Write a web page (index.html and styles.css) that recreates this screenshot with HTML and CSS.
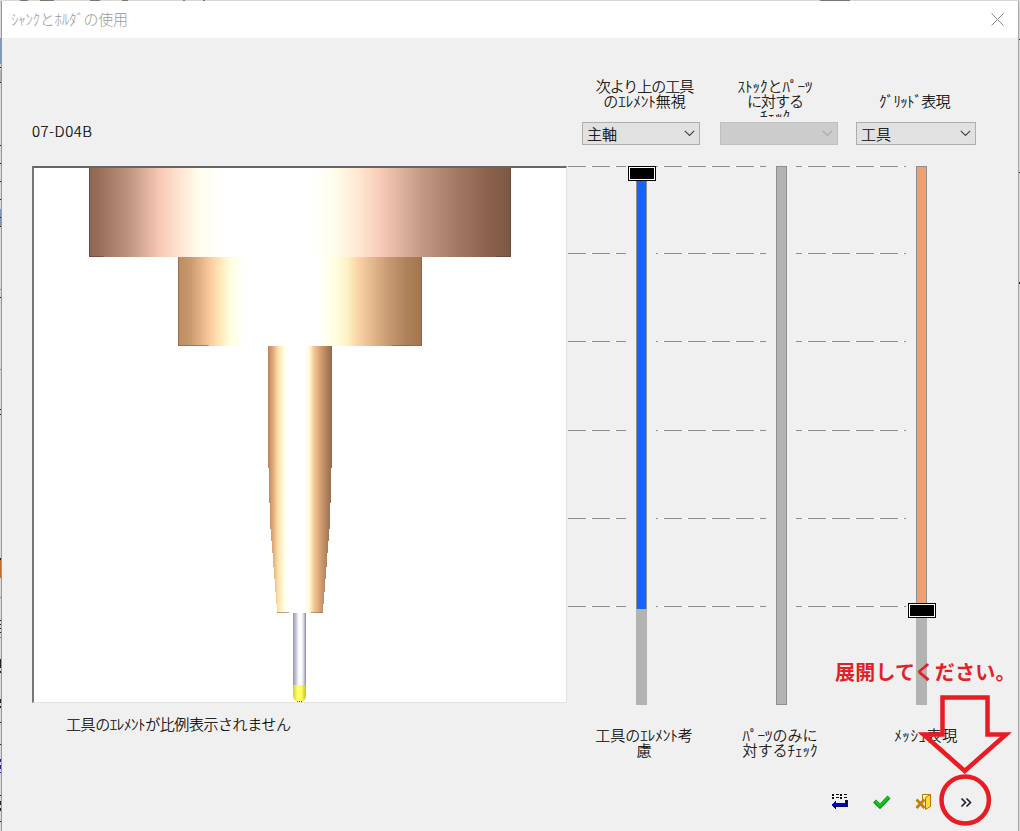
FILE: index.html
```html
<!DOCTYPE html>
<html lang="ja">
<head>
<meta charset="utf-8">
<title>ｼｬﾝｸとﾎﾙﾀﾞの使用</title>
<link rel="stylesheet" href="styles.css">
</head>
<body>
<div class="desktop">
  <svg class="edge" width="1020" height="831" shape-rendering="crispEdges">
    <path fill="#7e98b8" d="M0 38h2v26H0zM0 209h2v18H0z"/>
    <path fill="#aab0b8" d="M0 70h2v12H0z"/>
    <path fill="#c4702c" d="M0 560h2v18H0z"/>
    <path fill="#222" d="M0 67h2v1H0zM0 82h2v1H0zM0 145h2v1H0zM0 163h2v1H0zM0 181h2v1H0zM0 199h2v1H0zM0 217h2v1H0zM0 226h2v1H0zM0 297h2v1H0zM0 409h2v1H0zM0 414h2v1H0zM0 558h2v2H0zM0 620h2v1H0zM0 624h2v1H0zM0 628h2v1H0zM0 632h2v1H0zM0 659h2v9H0zM0 671h2v2H0zM0 699h2v4H0zM0 706h2v2H0zM0 722h2v1H0zM0 744h2v1H0zM0 795h2v1H0zM0 801h2v4H0zM0 808h2v3H0zM0 821h2v1H0z"/>
    <path fill="#888" d="M0 289h2v1H0zM0 369h2v1H0zM0 597h2v1H0zM0 637h2v1H0z"/>
    <path fill="#2020b0" d="M0 759h2v3H0zM0 765h2v4H0zM0 772h2v1H0z"/>
    <path fill="#777" d="M20 0h8v1h-8zM40 0h14v1H40zM90 0h10v1H90zM122 0h6v1h-6zM183 0h2v1h-2zM203 0h2v1h-2zM820 0h30v1h-30z"/>
    <path fill="#222" d="M1019 39h1v1h-1zM1019 172h1v1h-1zM1019 282h1v2h-1z"/>
  </svg>
  <main class="dialog">
    <header class="titlebar">
      <span class="title">ｼｬﾝｸとﾎﾙﾀﾞの使用</span>
      <svg class="close" width="13" height="13"><path d="M.5.5l12 12M12.500.5l-12 12" stroke="#888" fill="none"/></svg>
    </header>
    <div class="content">
      <section class="preview">
        <div class="tool-name">07-D04B</div>
        <div class="viewport">
          <svg width="533" height="534" viewBox="34 168 533 534">
            <defs>
              <linearGradient id="g1"><stop offset="0" stop-color="#8e6550"/><stop offset=".02" stop-color="#986d58"/><stop offset=".09" stop-color="#ba917b"/><stop offset=".165" stop-color="#f6c7b3"/><stop offset=".22" stop-color="#ffe7d4"/><stop offset=".26" stop-color="#fffdec"/><stop offset=".32" stop-color="#fff"/><stop offset=".53" stop-color="#fff"/><stop offset=".58" stop-color="#fffdec"/><stop offset=".64" stop-color="#ffe7d2"/><stop offset=".69" stop-color="#f7cbb7"/><stop offset=".79" stop-color="#c29a84"/><stop offset=".87" stop-color="#a27a64"/><stop offset=".95" stop-color="#89614c"/><stop offset="1" stop-color="#7e5743"/></linearGradient>
              <linearGradient id="g2"><stop offset="0" stop-color="#bc8b61"/><stop offset=".05" stop-color="#c8996d"/><stop offset=".13" stop-color="#fac99c"/><stop offset=".18" stop-color="#ffedbe"/><stop offset=".22" stop-color="#ffffe1"/><stop offset=".27" stop-color="#fff"/><stop offset=".57" stop-color="#fff"/><stop offset=".63" stop-color="#ffffe7"/><stop offset=".69" stop-color="#fdf4c6"/><stop offset=".735" stop-color="#fbd5a7"/><stop offset=".86" stop-color="#ca9b72"/><stop offset=".94" stop-color="#ac8058"/><stop offset="1" stop-color="#a3764e"/></linearGradient>
              <linearGradient id="g3"><stop offset="0" stop-color="#b9835c"/><stop offset=".08" stop-color="#e2aa7b"/><stop offset=".16" stop-color="#fee2ad"/><stop offset=".26" stop-color="#ffffe8"/><stop offset=".33" stop-color="#fff"/><stop offset=".57" stop-color="#fff"/><stop offset=".65" stop-color="#fff8d6"/><stop offset=".72" stop-color="#f4c695"/><stop offset=".84" stop-color="#cb986c"/><stop offset="1" stop-color="#93684a"/></linearGradient>
              <linearGradient id="g4"><stop offset="0" stop-color="#9295a9"/><stop offset=".3" stop-color="#d5d7eb"/><stop offset=".45" stop-color="#fff"/><stop offset=".65" stop-color="#fff"/><stop offset=".85" stop-color="#c8cae0"/><stop offset="1" stop-color="#8587a0"/></linearGradient>
              <linearGradient id="g5"><stop offset="0" stop-color="#d8ce20"/><stop offset=".35" stop-color="#ffff70"/><stop offset=".65" stop-color="#fffc60"/><stop offset="1" stop-color="#c8be18"/></linearGradient>
            </defs>
            <path fill="url(#g1)" d="M89 168h422v89H89z"/>
            <path fill="none" stroke="#60453a" stroke-opacity=".7" d="M89.500 168v88.500h14M510.500 168v88.500h-14"/>
            <path fill="url(#g2)" d="M178 257h244v89H178z"/>
            <path fill="none" stroke="#805a3a" stroke-opacity=".6" d="M178.500 257v88.500h30M421.500 257v88.500h-30"/>
            <path fill="url(#g3)" d="M268 346h64v122h-1v35h-1v26h-1v12h-1v12h-1v14h-1v12h-1v13h-1v12h-1v9h-46v-9h-1v-12h-1v-13h-1v-12h-1v-14h-1v-12h-1v-12h-1v-26h-1v-35h-1z"/>
            <path stroke="#936d4b" stroke-opacity=".6" d="M277 612.500h12M311 612.500h12"/>
            <path fill="url(#g4)" d="M293 613h13v72h-13z"/>
            <path fill="url(#g5)" d="M293 685h13v11c0 3-2 5-4 5h-5c-2 0-4-2-4-5z"/>
            <path stroke="#665f17" stroke-dasharray="1 1" d="M297 701.500h6"/>
          </svg>
        </div>
        <div class="note">工具のｴﾚﾒﾝﾄが比例表示されません</div>
      </section>
      <section class="controls">
        <div class="heads">
          <div class="field"><div class="label first"><span class="tight">次より上の工具</span><br>のｴﾚﾒﾝﾄ無視</div>
            <div class="combo">主軸<svg class="chev" width="11" height="7"><path d="M.8.8l4.700 4.700L10.200.8"/></svg></div></div>
          <div class="field"><div class="label second">ｽﾄｯｸとﾊﾟｰﾂ<br><span class="tight">に対する</span><br>ﾁｪｯｸ</div>
            <div class="combo disabled"><svg class="chev" width="11" height="7"><path d="M.8.8l4.700 4.700L10.200.8"/></svg></div></div>
          <div class="field wide"><div class="label third"><br><span class="grid-text">ｸﾞﾘｯﾄﾞ表現</span></div>
            <div class="combo">工具<svg class="chev" width="11" height="7"><path d="M.8.8l4.700 4.700L10.200.8"/></svg></div></div>
        </div>
        <div class="sliders">
          <div class="ticks t1"><i></i><i></i><i></i><i></i><i></i><i></i></div>
          <div class="track"><div class="fill blue"></div><div class="rest"></div><div class="thumb top"></div></div>
          <div class="ticks t2"><i></i><i></i><i></i><i></i><i></i><i></i></div>
          <div class="track"><div class="fill gray"></div></div>
          <div class="ticks t3"><i></i><i></i><i></i><i></i><i></i><i></i></div>
          <div class="track"><div class="fill orange"></div><div class="rest"></div><div class="thumb low"></div></div>
        </div>
        <div class="foots">
          <div class="foot f1">工具のｴﾚﾒﾝﾄ考<br>慮</div>
          <div class="foot f2">ﾊﾟｰﾂのみに<br>対するﾁｪｯｸ</div>
          <div class="foot f3">ﾒｯｼｭ表現</div>
        </div>
        <div class="actions">
          <svg width="18" height="16" viewBox="0 0 18 16" shape-rendering="crispEdges">
            <path fill="#111" d="M1 0h2v2H1zM5 0h3v1H5zM9 0h2v2H9zM13 0h3v1h-3zM1 3h2v2H1zM5 3h3v1H5zM9 3h2v2H9zM13 3h3v1h-3z"/>
            <path fill="#0000d8" d="M0 11l5-4v2h9V6h3v7H5v2z"/><path fill="#000068" d="M1 12h15v1H5v2zM15 6h1v7h-1z"/>
          </svg>
          <svg width="18" height="16" viewBox="0 0 18 16"><path fill="none" stroke="#078a12" stroke-width="4" d="M1.500 7L7 12.500 16 3"/><path fill="none" stroke="#0fc51b" stroke-width="2.600" d="M2 7l5 5 8.500-9"/></svg>
          <svg width="18" height="18" viewBox="0 0 18 18"><path fill="#fff7a0" stroke="#b67900" d="M7.500 8V1.500h8v12h-4"/><path fill="#ffd83c" stroke="#b67900" d="M10.500 4.500l5-3v12l-5 3z"/><path fill="none" stroke="#c77d0a" stroke-width="2.800" d="M1.500 6.500l8 8.500M9.500 6.500l-8 8.500"/></svg>
          <svg class="more" width="13" height="11" viewBox="0 0 13 11"><path fill="none" stroke="#1c1c2c" stroke-width="1.600" d="M1.500 1.500l4 4-4 4M6.500 1.500l4 4-4 4"/></svg>
        </div>
      </section>
    </div>
  </main>
  <div class="callout">展開してください。</div>
  <svg class="pointer" width="100" height="136" viewBox="916 692 100 136">
    <path d="M942.500 697.500H987.500V734.500H1006L964.700 771 923.500 734.500H942.500z"/>
    <ellipse cx="965.200" cy="800" rx="23.700" ry="23.500"/>
  </svg>
</div>
</body>
</html>
```
FILE: styles.css
```css
* { box-sizing: border-box; }
body { margin: 0; overflow: hidden; font: 300 15px/15px "Noto Sans CJK JP", sans-serif; color: #000; }
.desktop { position: relative; width: 1020px; height: 831px; padding: 1px 1px 0; background: #d8d8d8; overflow: hidden; }
.edge { position: absolute; left: 0; top: 0; }
.dialog { position: relative; height: 830px; background: #f0f0f0; border-left: 1px solid #999; border-right: 1px solid #a8a8a8; }
.titlebar { display: flex; align-items: center; justify-content: space-between; height: 37px; padding: 0 14px 0 9px; background: #fff; color: #999; }
.title { margin-top: -2px; letter-spacing: -.3px; }
.content { display: flex; padding-left: 30px; -webkit-text-stroke: .2px #000; }
.preview { width: 536px; }
.tool-name { height: 128px; padding-top: 85px; letter-spacing: .5px; }
.viewport { width: 535px; height: 537px; border: 2px solid; border-color: #666 #e3e3e3 #e3e3e3 #777; border-right-width: 1px; border-bottom-width: 1px; background: #fff; overflow: hidden; }
.viewport svg { display: block; }
.note { padding: 13px 0 0 34px; letter-spacing: -.42px; }
.controls { width: 440px; }
.heads { display: flex; gap: 20px; height: 128px; padding: 40px 0 0 14px; }
.field { width: 118px; }
.field.wide { width: 120px; margin-left: -2px; }
.label { height: 39px; overflow: hidden; text-align: center; white-space: nowrap; }
.first { padding-left: 7px; }
.second { padding-right: 8px; }
.third { padding-right: 3px; }
.tight { letter-spacing: -1px; }
.grid-text { letter-spacing: -.7px; }
.combo { display: flex; align-items: center; justify-content: space-between; height: 23px; margin-top: 4px; padding: 0 4px; border: 1px solid #adadad; background: #e1e1e1; line-height: 13px; padding-bottom: 1px; margin-top: 5px; }
.disabled { background: #ccc; border-color: #bfbfbf; justify-content: flex-end; }
.chev { fill: none; stroke: #444; stroke-width: 1.200; }
.disabled .chev { stroke: #aaa; }
.sliders { display: flex; height: 539px; }
.ticks { display: flex; flex-direction: column; justify-content: space-between; height: 441px; }
.ticks i { height: 1px; background: repeating-linear-gradient(90deg, #8c8c8c 0 18px, #fff 18px 24px) 0 0; }
.ticks i:nth-child(2), .ticks i:nth-child(3) { transform: translateY(-1px); }
.t1 { width: 58px; }
.t2, .t3 { width: 110px; }
.t2 i { background: repeating-linear-gradient(90deg, #8c8c8c 0 2px, #fff 2px 8px, #8c8c8c 8px 24px); }
.t3 i { background: repeating-linear-gradient(90deg, #8c8c8c 0 6px, #fff 6px 12px, #8c8c8c 12px 24px); }
.track { position: relative; display: flex; flex-direction: column; width: 30px; padding: 0 9px 0 10px; }
.fill { border: 1px solid #8f8f8f; }
.blue { height: 443px; background: #1464ff; border-bottom: 0; }
.gray { height: 539px; background: #b3b3b3; }
.orange { height: 443px; background: #f0a070; border-bottom: 0; }
.rest { flex: 1; background: #b3b3b3; }
.thumb { position: absolute; left: 2px; width: 28px; height: 15px; border: 1px solid #000; background: #000; box-shadow: inset 0 0 0 1px #fff; }
.thumb.top { top: 0; }
.thumb.low { top: 437px; }
.foots { display: flex; height: 88px; padding-top: 22px; text-align: center; white-space: nowrap; }
.foot { width: 136px; }
.f1 { margin-left: 8px; }
.f3 { width: 156px; letter-spacing: .6px; }
.actions { display: flex; align-items: center; height: 18px; margin-left: 263px; gap: 24px; }
.more { margin-left: 3px; }
.callout { position: absolute; left: 835px; top: 661px; font-size: 20px; line-height: 22px; font-weight: 700; letter-spacing: .2px; color: #e02226; white-space: nowrap; }
.pointer { position: absolute; left: 916px; top: 692px; fill: none; stroke: #e81c24; stroke-width: 4.500; }
```
